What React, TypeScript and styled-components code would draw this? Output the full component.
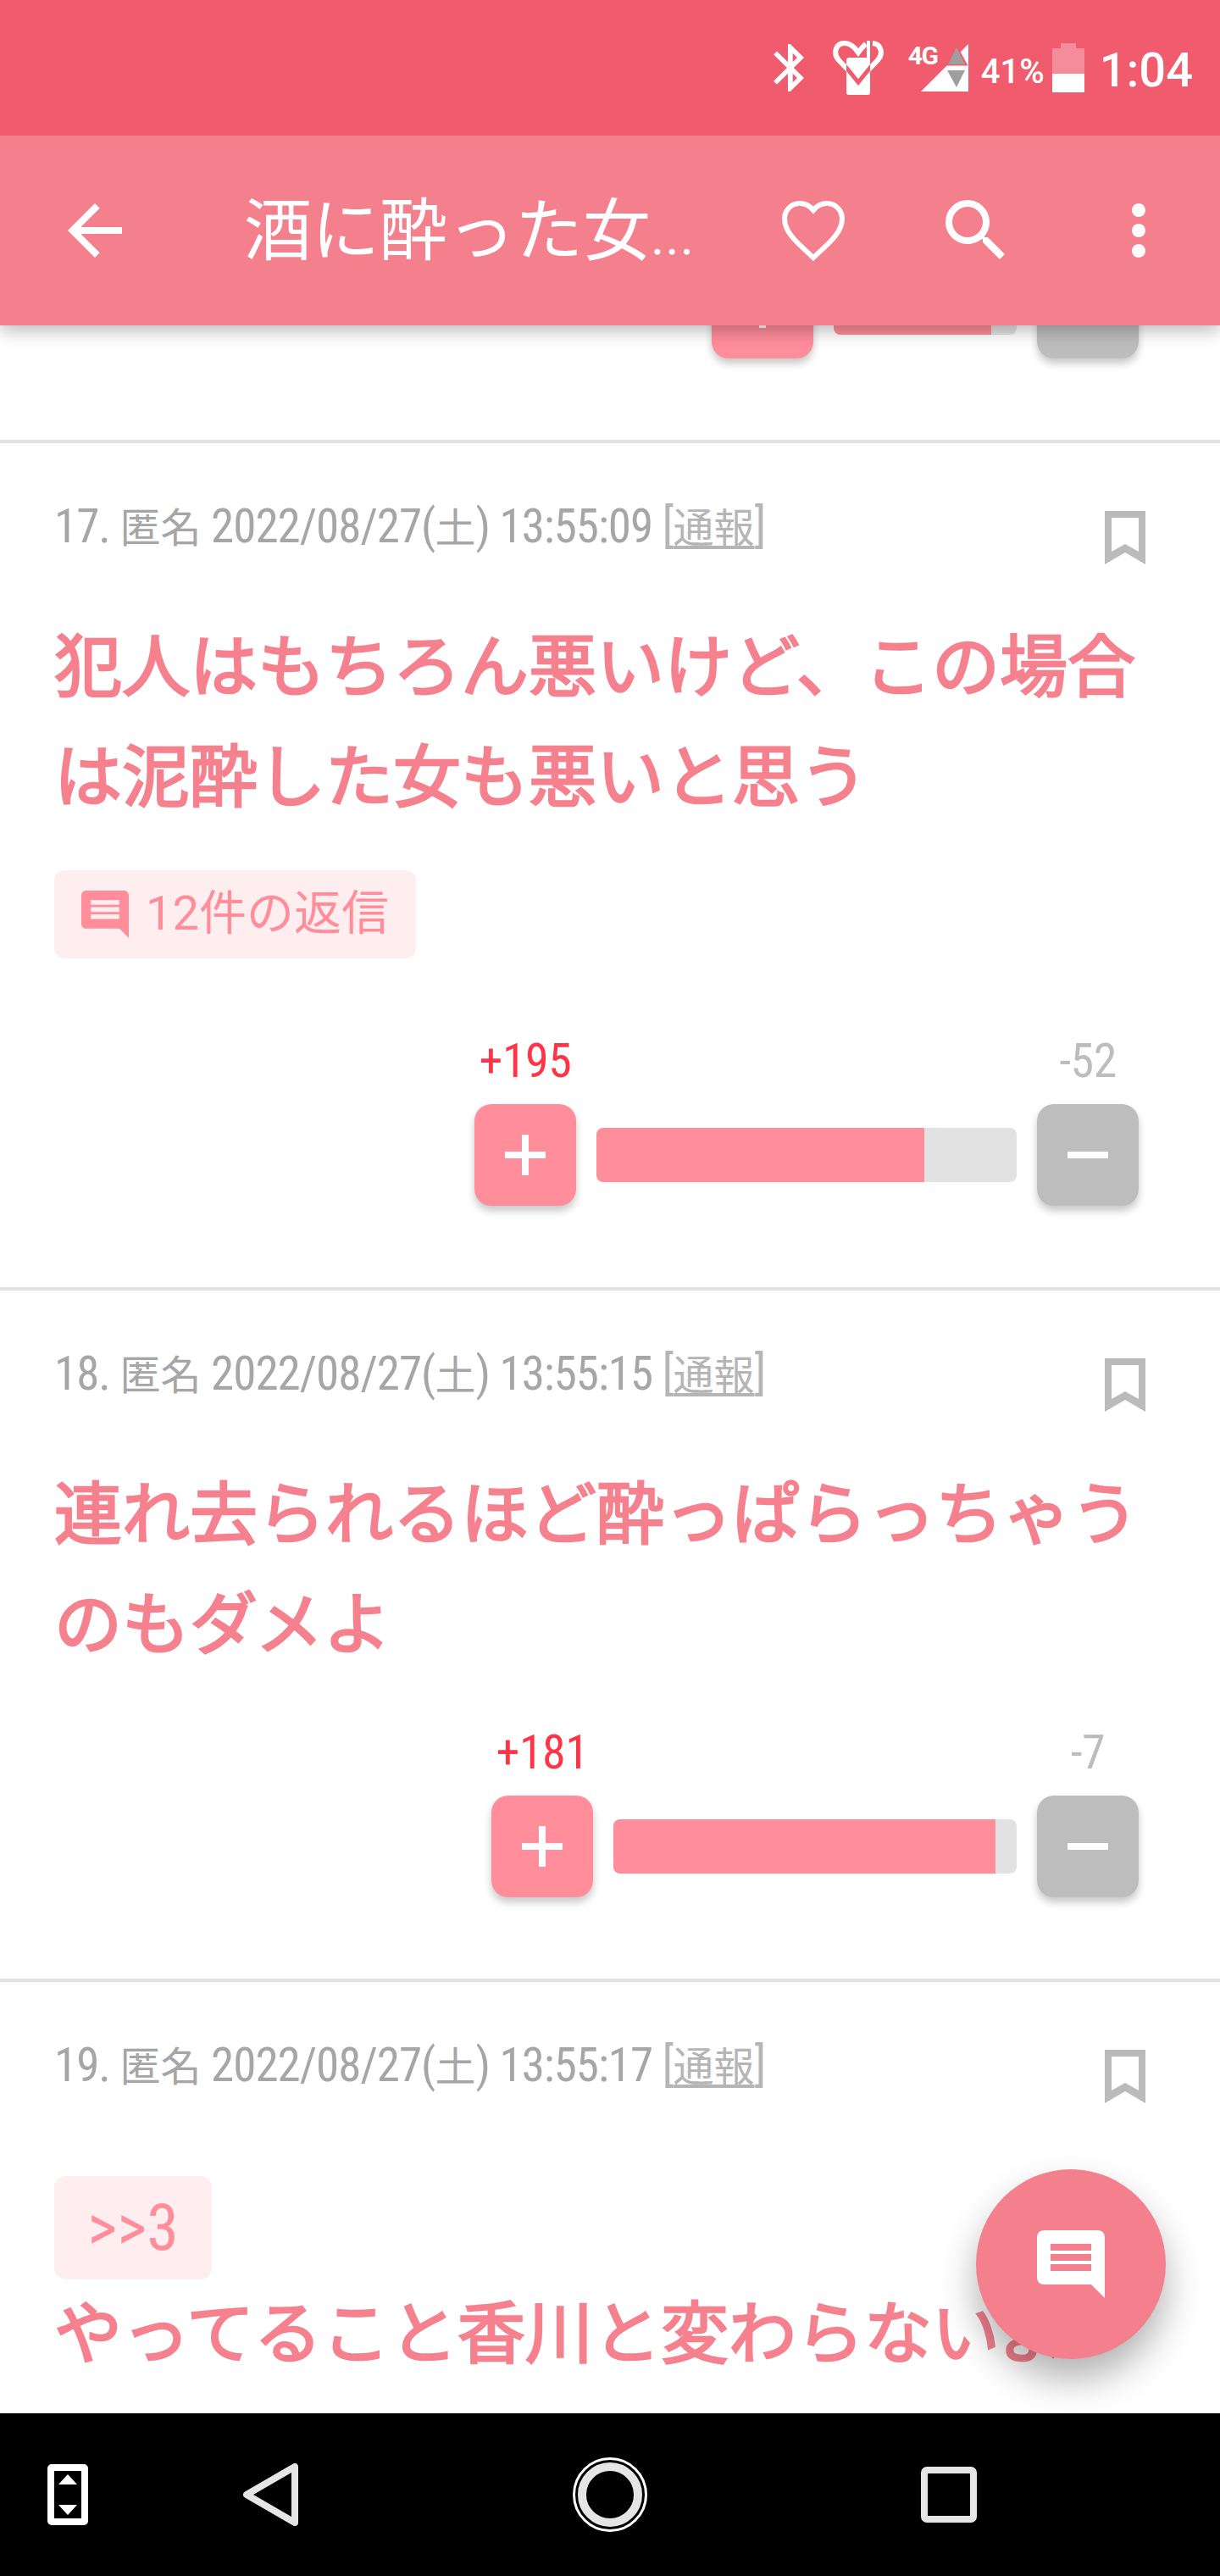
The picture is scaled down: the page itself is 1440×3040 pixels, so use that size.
import React from 'react'
import styled, { createGlobalStyle } from 'styled-components'

const GlobalStyle = createGlobalStyle`
  html, body {
    margin: 0;
    padding: 0;
    width: 1440px;
    height: 3040px;
    overflow: hidden;
    background: #fff;
  }
`

const JP = `"Noto Sans CJK JP", "Noto Sans", sans-serif`

const Screen = styled.div`
  position: relative;
  width: 1440px;
  height: 3040px;
  display: flex;
  flex-direction: column;
  overflow: hidden;
  font-family: ${JP};
  background: #fff;
`

const StatusBar = styled.div`
  position: relative;
  z-index: 3;
  flex: none;
  height: 160px;
  display: flex;
  align-items: flex-start;
  justify-content: flex-end;
  padding: 48px 32px 0 0;
  box-sizing: border-box;
  background: #f05c6d;
  color: #fff;
  font-family: Roboto, sans-serif;
`

const StatusIcon = styled.svg<{ $left?: number; $top?: number }>`
  display: block;
  flex: none;
  fill: #fff;
  margin-left: ${(p) => p.$left ?? 0}px;
  margin-top: ${(p) => p.$top ?? 0}px;
`

const SignalWrap = styled.div`
  position: relative;
  flex: none;
  width: 70px;
  height: 60px;
  margin: 4px 0 0 30px;
  svg {
    position: absolute;
    right: 0;
    top: 0;
  }
`

const NetworkType = styled.span`
  position: absolute;
  left: -1px;
  top: -3px;
  font-size: 30px;
  line-height: 34px;
  font-weight: 700;
  letter-spacing: -1.5px;
`

const Percent = styled.span`
  flex: none;
  margin: 13px 0 0 15px;
  font-size: 40px;
  line-height: 48px;
  font-weight: 500;
`

const Clock = styled.span`
  flex: none;
  margin: 2px 0 0 18px;
  font-size: 56px;
  line-height: 66px;
  font-weight: 500;
`

const Toolbar = styled.header`
  position: relative;
  z-index: 2;
  flex: none;
  height: 224px;
  display: flex;
  align-items: center;
  padding: 0 48px 0 64px;
  box-sizing: border-box;
  background: #f5808d;
  box-shadow: 0 6px 20px rgba(0, 0, 0, 0.28);
`

const ToolbarIcon = styled.svg`
  display: block;
  flex: none;
  width: 96px;
  height: 96px;
  fill: #fff;
  & + & {
    margin-left: 96px;
  }
`

const Title = styled.h1`
  flex: 1;
  margin: 0 0 0 128px;
  color: #fff;
  font-size: 80px;
  line-height: 112px;
  font-weight: 400;
  white-space: nowrap;
`

const Dots = styled.span`
  font-family: Roboto, sans-serif;
  letter-spacing: 1px;
  font-size: 62px;
`

const Main = styled.main`
  flex: 1;
  min-height: 0;
  overflow: hidden;
`

const List = styled.div`
  margin-top: -81px;
`

const Row = styled.article`
  border-bottom: 4px solid #e3e3e3;
  padding: 0 96px 96px 64px;
`

const PostHead = styled.div`
  display: flex;
  justify-content: space-between;
  align-items: flex-start;
  padding-top: 62px;
  height: 70px;
`

const Meta = styled.div`
  display: flex;
  align-items: baseline;
  white-space: pre;
  color: #a6a6a6;
  font-size: 48px;
  line-height: 68px;
`

const Latin = styled.span`
  font-family: Roboto, sans-serif;
  font-stretch: 75%;
  font-size: 55px;
  letter-spacing: -1px;
`

const Report = styled.span`
  color: #b5b5b5;
  text-decoration: underline;
  text-underline-offset: 4px;
`

const Bracket = styled(Latin)`
  color: #b5b5b5;
`

const BookmarkIcon = styled.svg`
  display: block;
  flex: none;
  width: 48px;
  height: 63px;
  margin: 18px -8px 0 0;
  fill: #bababa;
`

const Body = styled.h2`
  margin: 60px 0 0;
  padding-bottom: 5px;
  width: 1280px;
  color: #f6818e;
  font-size: 80px;
  line-height: 130px;
  font-weight: 400;
  -webkit-text-stroke: 2.5px #f6818e;
`

const Quote = styled.div`
  display: flex;
  align-items: center;
  justify-content: center;
  width: 186px;
  height: 122px;
  margin: 97px 0 -68px;
  border-radius: 14px;
  background: #ffeef0;
  color: #ff8d9a;
  font-family: Roboto, sans-serif;
  font-stretch: 75%;
  font-size: 76px;
`

const ReplyChip = styled.div`
  display: flex;
  align-items: center;
  gap: 20px;
  width: max-content;
  height: 104px;
  margin-top: 47px;
  padding: 0 32px;
  box-sizing: border-box;
  border-radius: 12px;
  background: #ffeef0;
  color: #ff8d9a;
  font-size: 56px;
  line-height: 76px;
  svg {
    display: block;
    width: 56px;
    height: 56px;
    fill: #ff8d9a;
  }
  span {
    margin-top: -8px;
  }
`

const ChipCount = styled.span`
  font-family: Roboto, sans-serif;
  font-stretch: 90%;
`

const Votes = styled.div<{ $track: number; $gap: number; $scored: boolean }>`
  display: grid;
  grid-template-columns: 120px ${(p) => p.$track}px 120px;
  grid-template-rows: ${(p) => (p.$scored ? '68px 120px' : '120px')};
  row-gap: 17px;
  column-gap: 24px;
  align-items: center;
  justify-content: end;
  margin-top: ${(p) => p.$gap}px;
`

const Score = styled.span<{ $plus?: boolean }>`
  text-align: center;
  font-family: Roboto, sans-serif;
  font-stretch: 75%;
  font-size: 56px;
  letter-spacing: -0.5px;
  line-height: 68px;
  color: ${(p) => (p.$plus ? '#ff3447' : '#bdbdbd')};
`

const VoteButton = styled.button<{ $plus?: boolean }>`
  display: flex;
  align-items: center;
  justify-content: center;
  width: 120px;
  height: 120px;
  padding: 0;
  border: 0;
  border-radius: 20px;
  background: ${(p) => (p.$plus ? '#ff8d9a' : '#bdbdbd')};
  box-shadow: 0 6px 10px rgba(0, 0, 0, 0.22);
  svg {
    display: block;
    width: 48px;
    height: 48px;
    fill: #fff;
  }
`

const Track = styled.div`
  height: 64px;
  border-radius: 8px;
  overflow: hidden;
  background: #e2e2e2;
`

const Fill = styled.div`
  height: 100%;
  background: #ff8d9a;
`

const Spacer = styled.span``

const Fab = styled.button`
  position: absolute;
  right: 64px;
  bottom: 256px;
  z-index: 1;
  display: flex;
  align-items: center;
  justify-content: center;
  width: 224px;
  height: 224px;
  padding: 0;
  border: 0;
  border-radius: 50%;
  background: #f5808d;
  box-shadow: 0 24px 44px rgba(0, 0, 0, 0.3);
  svg {
    display: block;
    width: 96px;
    height: 96px;
    fill: #fff;
  }
`

const NavBar = styled.nav`
  position: relative;
  z-index: 2;
  flex: none;
  height: 192px;
  display: grid;
  grid-template-columns: 230px 390px 411px auto;
  align-items: center;
  justify-content: start;
  padding-left: 56px;
  background: #000;
`

const NavIcon = styled.svg`
  display: block;
`

const COMMENT =
  'M21.99 4c0-1.1-.89-2-1.99-2H4c-1.1 0-2 .9-2 2v12c0 1.1.9 2 2 2h14l4 4-.01-18zM18 14H6v-2h12v2zm0-3H6V9h12v2zm0-3H6V6h12v2z'

const Plus = () => (
  <svg viewBox="0 0 48 48">
    <path d="M20 0h8v20h20v8H28v20h-8V28H0v-8h20z" />
  </svg>
)

const Minus = () => (
  <svg viewBox="0 0 48 48">
    <path d="M0 20h48v8H0z" />
  </svg>
)

type VoteProps = { plus?: number; minus?: number; track: number; fill: number; gap: number }

const VoteControl: React.FC<VoteProps> = ({ plus, minus, track, fill, gap }) => (
  <Votes $track={track} $gap={gap} $scored={plus !== undefined}>
    {plus !== undefined && (
      <>
        <Score $plus>+{plus}</Score>
        <Spacer />
        <Score>-{minus}</Score>
      </>
    )}
    <VoteButton $plus aria-label="plus">
      <Plus />
    </VoteButton>
    <Track>
      <Fill style={{ width: `${fill}px` }} />
    </Track>
    <VoteButton aria-label="minus">
      <Minus />
    </VoteButton>
  </Votes>
)

const PostHeader: React.FC<{ no: number; time: string }> = ({ no, time }) => (
  <PostHead>
    <Meta>
      <Latin>{no}. </Latin>匿名<Latin> 2022/08/27(</Latin>土<Latin>) {time} </Latin>
      <Bracket>[</Bracket>
      <Report>通報</Report>
      <Bracket>]</Bracket>
    </Meta>
    <BookmarkIcon viewBox="0 0 48 63">
      <path fillRule="evenodd" d="M0 0h48v63L24 49 0 63zM8 8v40l16-9 16 9V8z" />
    </BookmarkIcon>
  </PostHead>
)

const HeartPhone = () => (
  <StatusIcon $left={34} width="60" height="64" viewBox="0 0 60 64">
    <defs>
      <clipPath id="phone-body">
        <rect x="16" y="20" width="28" height="44" />
      </clipPath>
    </defs>
    <path
      d="M30 47L7 23C0 15 3 3 14 3c7 0 12 5 16 11 3-4 6-8 9-10M47 3c10 1 13 12 6 20L30 47"
      fill="none"
      stroke="#fff"
      strokeWidth="6"
    />
    <rect x="16" y="20" width="28" height="44" rx="3" />
    <rect x="40" y="0" width="4" height="24" />
    <path
      d="M3 14L30 47l27-33"
      fill="none"
      stroke="#f05c6d"
      strokeWidth="5"
      clipPath="url(#phone-body)"
      transform="translate(0 2)"
    />
  </StatusIcon>
)

const Signal = () => (
  <StatusIcon width="56" height="56" viewBox="0 0 56 56">
    <path d="M56 0v56H0z" />
    <path d="M42 4l11 20H31z" fill="#9e9e9e" stroke="#f05c6d" strokeWidth="3" />
    <path d="M42 4l10 20H32z" fill="#9e9e9e" />
    <path d="M31 31h21L42 51z" fill="#9e9e9e" />
  </StatusIcon>
)

const Battery = () => (
  <StatusIcon $left={9} $top={3} width="38" height="58" viewBox="0 0 38 58">
    <path d="M10 0h18v6h10v30H0V6h10z" fill="#fff" fillOpacity="0.3" />
    <path d="M0 36h38v22H0z" />
  </StatusIcon>
)

export default function App() {
  return (
    <Screen>
      <GlobalStyle />
      <StatusBar>
        <StatusIcon $top={4} width="36" height="56" viewBox="5 2 12.71 20" preserveAspectRatio="none">
          <path d="M17.71 7.71L12 2h-1v7.59L6.41 5 5 6.41 10.59 12 5 17.59 6.41 19 11 14.41V22h1l5.71-5.71-4.3-4.29 4.3-4.29zM13 5.83l1.88 1.88L13 9.59V5.83zm1.88 10.46L13 18.17v-3.76l1.88 1.88z" />
        </StatusIcon>
        <HeartPhone />
        <SignalWrap>
          <NetworkType>4G</NetworkType>
          <Signal />
        </SignalWrap>
        <Percent>41%</Percent>
        <Battery />
        <Clock>1:04</Clock>
      </StatusBar>

      <Toolbar>
        <ToolbarIcon viewBox="0 0 24 24">
          <path d="M20 11H7.83l5.59-5.59L12 4l-8 8 8 8 1.41-1.41L7.83 13H20v-2z" />
        </ToolbarIcon>
        <Title>
          酒に酔った女<Dots>...</Dots>
        </Title>
        <ToolbarIcon viewBox="0 0 24 24">
          <path
            d="M12 20l-1.2-1.1C6.5 15 3.5 12.2 3.5 8.5 3.5 6 5.5 4 8 4c1.5 0 3 .8 4 2 1-1.2 2.5-2 4-2 2.5 0 4.5 2 4.5 4.5 0 3.7-3 6.5-7.3 10.4z"
            fill="none"
            stroke="#fff"
            strokeWidth="1.5"
          />
        </ToolbarIcon>
        <ToolbarIcon viewBox="0 0 24 24">
          <path d="M15.5 14h-.79l-.28-.27C15.41 12.59 16 11.11 16 9.5 16 5.91 13.09 3 9.5 3S3 5.91 3 9.5 5.91 16 9.5 16c1.61 0 3.09-.59 4.23-1.57l.27.28v.79l5 4.99L20.49 19l-4.99-5zm-6 0C7.01 14 5 11.99 5 9.5S7.01 5 9.5 5 14 7.01 14 9.5 11.99 14 9.5 14z" />
        </ToolbarIcon>
        <ToolbarIcon viewBox="0 0 24 24">
          <path d="M12 8c1.1 0 2-.9 2-2s-.9-2-2-2-2 .9-2 2 .9 2 2 2zm0 2c-1.1 0-2 .9-2 2s.9 2 2 2 2-.9 2-2-.9-2-2-2zm0 6c-1.1 0-2 .9-2 2s.9 2 2 2 2-.9 2-2-.9-2-2-2z" />
        </ToolbarIcon>
      </Toolbar>

      <Main>
        <List>
          <Row>
            <VoteControl track={216} fill={186} gap={0} />
          </Row>
          <Row>
            <PostHeader no={17} time="13:55:09" />
            <Body>犯人はもちろん悪いけど、この場合は泥酔した女も悪いと思う</Body>
            <ReplyChip>
              <svg viewBox="2 2 20 20">
                <path d={COMMENT} />
              </svg>
              <span>
                <ChipCount>12</ChipCount>件の返信
              </span>
            </ReplyChip>
            <VoteControl plus={195} minus={52} track={496} fill={387} gap={87} />
          </Row>
          <Row>
            <PostHeader no={18} time="13:55:15" />
            <Body>連れ去られるほど酔っぱらっちゃうのもダメよ</Body>
            <VoteControl plus={181} minus={7} track={476} fill={451} gap={54} />
          </Row>
          <Row>
            <PostHeader no={19} time="13:55:17" />
            <Quote>&gt;&gt;3</Quote>
            <Body>やってること香川と変わらないよ</Body>
          </Row>
        </List>
      </Main>

      <Fab aria-label="comment">
        <svg viewBox="0 0 24 24">
          <path d={COMMENT} />
        </svg>
      </Fab>

      <NavBar>
        <NavIcon width="48" height="72" viewBox="0 0 48 72">
          <rect width="48" height="72" rx="5" fill="#fff" />
          <rect x="8" y="8" width="32" height="56" fill="#000" />
          <path d="M24 12l11 12H13zM13 48h22L24 60z" fill="#fff" />
        </NavIcon>
        <NavIcon width="66" height="74" viewBox="0 0 66 74">
          <path
            d="M62 4v66L5 37z"
            fill="none"
            stroke="#e5e5e5"
            strokeWidth="8"
            strokeLinejoin="round"
          />
        </NavIcon>
        <NavIcon width="88" height="88" viewBox="0 0 88 88">
          <circle cx="44" cy="44" r="42.5" fill="none" stroke="#fff" strokeWidth="3" />
          <circle cx="44" cy="44" r="33" fill="none" stroke="#e5e5e5" strokeWidth="10" />
        </NavIcon>
        <NavIcon width="66" height="66" viewBox="0 0 66 66">
          <rect x="4" y="4" width="58" height="58" rx="3" fill="none" stroke="#e5e5e5" strokeWidth="8" />
        </NavIcon>
      </NavBar>
    </Screen>
  )
}
